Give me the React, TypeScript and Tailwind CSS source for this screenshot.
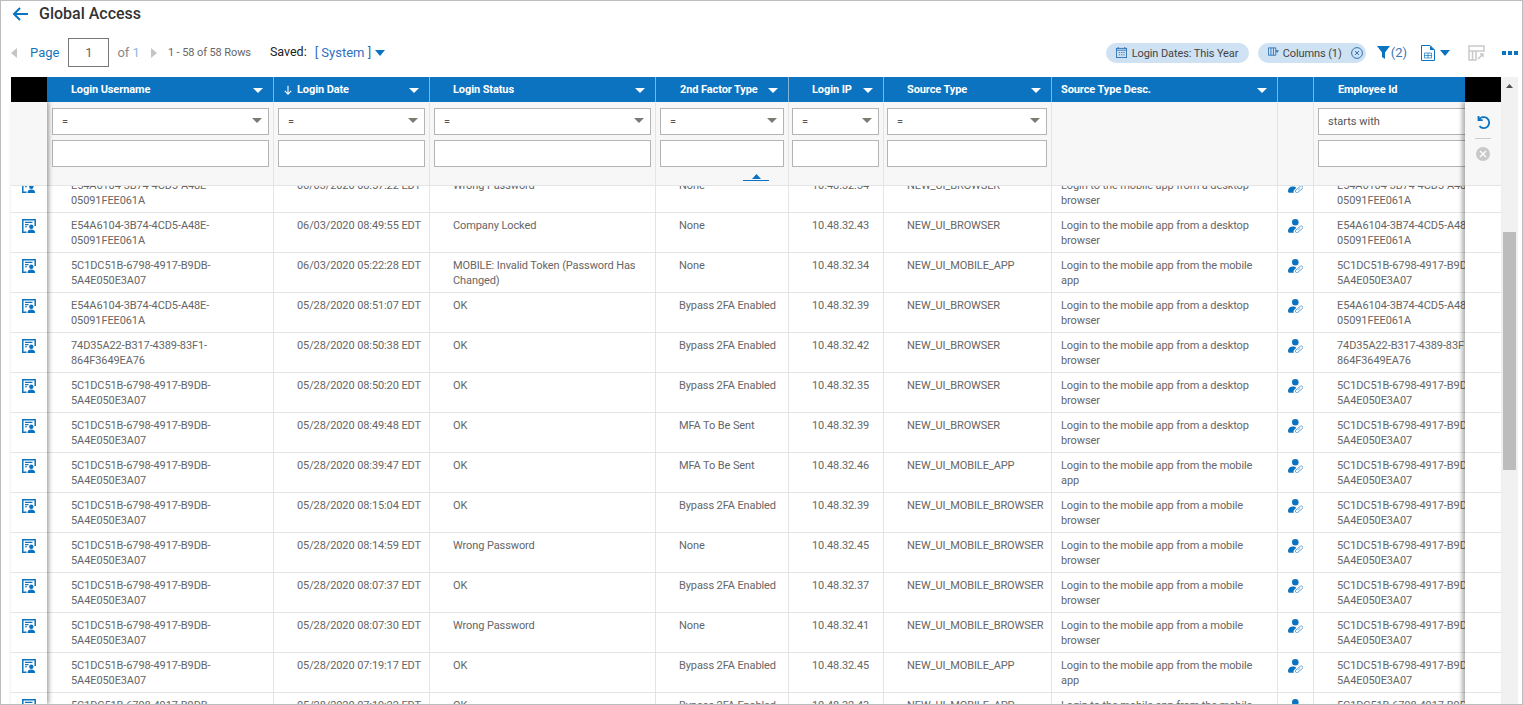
import React from 'react';

const GRID = 'grid grid-cols-[227px_156px_226px_133px_95px_168px_226px_36px_226px] w-[1493px]';

const E54 = 'E54A6104-3B74-4CD5-A48E-05091FEE061A';
const C51 = '5C1DC51B-6798-4917-B9DB-5A4E050E3A07';
const D35 = '74D35A22-B317-4389-83F1-864F3649EA76';
const DESKTOP = 'Login to the mobile app from a desktop browser';
const MOBILE_APP = 'Login to the mobile app from the mobile app';
const MOBILE_BROWSER = 'Login to the mobile app from a mobile browser';

const rows = [
  [E54, '06/03/2020 08:57:22 EDT', 'Wrong Password', 'None', '10.48.32.34', 'NEW_UI_BROWSER', DESKTOP],
  [E54, '06/03/2020 08:49:55 EDT', 'Company Locked', 'None', '10.48.32.43', 'NEW_UI_BROWSER', DESKTOP],
  [C51, '06/03/2020 05:22:28 EDT', 'MOBILE: Invalid Token (Password Has Changed)', 'None', '10.48.32.34', 'NEW_UI_MOBILE_APP', MOBILE_APP],
  [E54, '05/28/2020 08:51:07 EDT', 'OK', 'Bypass 2FA Enabled', '10.48.32.39', 'NEW_UI_BROWSER', DESKTOP],
  [D35, '05/28/2020 08:50:38 EDT', 'OK', 'Bypass 2FA Enabled', '10.48.32.42', 'NEW_UI_BROWSER', DESKTOP],
  [C51, '05/28/2020 08:50:20 EDT', 'OK', 'Bypass 2FA Enabled', '10.48.32.35', 'NEW_UI_BROWSER', DESKTOP],
  [C51, '05/28/2020 08:49:48 EDT', 'OK', 'MFA To Be Sent', '10.48.32.39', 'NEW_UI_BROWSER', DESKTOP],
  [C51, '05/28/2020 08:39:47 EDT', 'OK', 'MFA To Be Sent', '10.48.32.46', 'NEW_UI_MOBILE_APP', MOBILE_APP],
  [C51, '05/28/2020 08:15:04 EDT', 'OK', 'Bypass 2FA Enabled', '10.48.32.39', 'NEW_UI_MOBILE_BROWSER', MOBILE_BROWSER],
  [C51, '05/28/2020 08:14:59 EDT', 'Wrong Password', 'None', '10.48.32.45', 'NEW_UI_MOBILE_BROWSER', MOBILE_BROWSER],
  [C51, '05/28/2020 08:07:37 EDT', 'OK', 'Bypass 2FA Enabled', '10.48.32.37', 'NEW_UI_MOBILE_BROWSER', MOBILE_BROWSER],
  [C51, '05/28/2020 08:07:30 EDT', 'Wrong Password', 'None', '10.48.32.41', 'NEW_UI_MOBILE_BROWSER', MOBILE_BROWSER],
  [C51, '05/28/2020 07:19:17 EDT', 'OK', 'Bypass 2FA Enabled', '10.48.32.45', 'NEW_UI_MOBILE_APP', MOBILE_APP],
  [C51, '05/28/2020 07:19:22 EDT', 'OK', 'Bypass 2FA Enabled', '10.48.32.43', 'NEW_UI_MOBILE_APP', MOBILE_APP],
];

const Caret = ({ className }: { className: string }) => (
  <svg viewBox="0 0 10 6" preserveAspectRatio="none" className={className}>
    <path d="M0 0h10L5 6z" fill="currentColor" />
  </svg>
);

const PagerArrow = ({ d }: { d: string }) => (
  <svg viewBox="0 0 6 10" className="w-[6px] h-[10px]">
    <path d={d} fill="#c4c4c4" />
  </svg>
);

const DocPerson = () => (
  <svg viewBox="0 0 14 14" className="w-[14px] h-[14px] text-[#0b73c0]">
    <path d="M4.500 13.200H.8V.8h12.400V7" fill="none" stroke="currentColor" strokeWidth="1.500" />
    <path d="M3 3.400h7.500M3 5.600h3.500M3 7.800h2" stroke="currentColor" strokeWidth="1.100" />
    <circle cx="9.300" cy="7.700" r="2.200" fill="currentColor" />
    <path d="M5.400 14c0-2.400 1.500-3.500 3.900-3.500s3.900 1.100 3.900 3.500z" fill="currentColor" />
  </svg>
);

const PersonKey = () => (
  <svg viewBox="0 0 15 14" className="w-[15px] h-[14px] text-[#0b73c0]">
    <circle cx="7.300" cy="3.300" r="3.300" fill="currentColor" />
    <path d="M0 12c0-2.700 2-4.500 4.800-4.500 1.500 0 2.700.4 3.500 1.200L6 11.200c-.6.700-.6 1.800-.1 2.600H1.500C.6 13.800 0 13 0 12z" fill="currentColor" />
    <rect x="6.700" y="8.900" width="8.800" height="3" rx="1.500" transform="rotate(-40 11 10.400)" fill="none" stroke="#4f97d2" strokeWidth=".8" />
    <path d="M9.800 11.300l2.300-2" stroke="#4f97d2" strokeWidth=".6" />
  </svg>
);

const HeaderCell = ({ label, sorted, pad = 'pl-[23px]', noCaret }: { label?: string; sorted?: boolean; pad?: string; noCaret?: boolean }) => (
  <div className={`relative flex items-center h-[25px] pt-[2px] border-r border-[#7fb4dd] text-white text-[11px] font-bold tracking-[-0.1px] ${pad}`}>
    {sorted && (
      <svg viewBox="0 0 10 12" className="absolute left-[10px] top-[8px] w-[8px] h-[11px]">
        <path d="M5 0v10M1 6.500L5 10.500l4-4" fill="none" stroke="white" strokeWidth="1.400" />
      </svg>
    )}
    {label}
    {label && !noCaret && <Caret className="absolute right-[10px] top-[11px] w-[10px] h-[5px]" />}
  </div>
);

const FilterCell = ({ children, pad = 'pl-[4px]' }: { children?: React.ReactNode; pad?: string }) => (
  <div className={`relative h-[83px] border-r border-[#e4e4e4] pr-[4px] pt-[6px] flex flex-col gap-[5px] ${pad}`}>
    {children}
  </div>
);

const SelectBox = ({ label = '=', withCaret = true }: { label?: string; withCaret?: boolean }) => (
  <div className="relative h-[27px] w-full bg-white border border-[#b4b4b4] pl-[9px] pt-[2px] flex items-center text-[11px] text-[#555]">
    {label}
    {withCaret && <Caret className="absolute right-[6px] top-[9px] w-[10px] h-[5px] text-[#7d7a72]" />}
  </div>
);

const TextBox = () => <div className="h-[27px] w-full bg-white border border-[#b4b4b4]" />;

const OpFilter = ({ pad }: { pad?: string }) => (
  <FilterCell pad={pad}>
    <SelectBox />
    <TextBox />
  </FilterCell>
);

const Cell = ({ children, pad = 'pl-[23px] pr-[4px]' }: { children?: React.ReactNode; pad?: string }) => (
  <div className={`h-full border-r border-[#e4e4e4] pt-[5px] ${pad}`}>{children}</div>
);

export default function App() {
  return (
    <div className="w-[1523px] h-[705px] box-border border border-[#bdbdbd] bg-white overflow-hidden flex flex-col font-['Roboto',sans-serif]">
      <div className="flex items-center h-[25px] shrink-0 pl-[11px] gap-[11px]">
        <svg viewBox="0 0 16 14" className="w-[16px] h-[14px]">
          <path d="M16 7H2M8 1L2 7l6 6" fill="none" stroke="#0b73c0" strokeWidth="2" />
        </svg>
        <span className="text-[16px] font-medium text-[#333]">Global Access</span>
      </div>

      <div className="flex items-center h-[29px] mt-[12px] shrink-0 pl-[10px] pr-[4px]">
        <PagerArrow d="M6 0v10L0 5z" />
        <span className="ml-[13px] text-[13px] text-[#1b75bb]">Page</span>
        <div className="ml-[9px] w-[41px] h-[29px] border border-[#777] flex items-center justify-center text-[13px] text-[#666]">1</div>
        <span className="ml-[8px] text-[13px] text-[#888]">of <span className="text-[#8fb8dc]">1</span></span>
        <div className="ml-[11px]"><PagerArrow d="M0 0v10l6-5z" /></div>
        <span className="ml-[11px] pt-[2px] text-[11px] tracking-[-0.1px] text-[#666]">1 - 58 of 58 Rows</span>
        <span className="ml-[19px] text-[12.500px] text-[#222]">Saved:</span>
        <span className="ml-[8px] text-[13px] text-[#2f6fc4]">[ System ]</span>
        <Caret className="ml-[4px] w-[10px] h-[6px] text-[#0b73c0]" />

        <div className="ml-auto flex items-center">
          <div className="mt-px flex items-center h-[20px] w-[143px] pl-[10px] gap-[5px] rounded-full bg-[#cfe2f3] text-[11px] tracking-[-0.1px] text-[#444] whitespace-nowrap">
            <svg viewBox="0 0 12 12" className="w-[11px] h-[11px] -translate-y-px">
              <rect x=".5" y="1.500" width="11" height="10" fill="none" stroke="#2f74b5" />
              <path d="M.5 3.500h11M2.500 0v2M9.500 0v2M3 6h1.500M5.500 6H7M8 6h1.500M3 8.500h1.500M5.500 8.500H7M8 8.500h1.500" stroke="#2f74b5" />
            </svg>
            <span className="pt-[2px]">Login Dates: This Year</span>
          </div>
          <div className="mt-px ml-[9px] flex items-center h-[20px] w-[108px] pl-[10px] rounded-full bg-[#cfe2f3] text-[11px] tracking-[-0.1px] text-[#444] whitespace-nowrap">
            <svg viewBox="0 0 12 10" className="w-[11px] h-[10px] mr-[4px] -translate-y-px">
              <path d="M.5.500h8v8h-8zM3.200.500v8M5.900.500v8" fill="none" stroke="#2f74b5" />
              <path d="M8 3h4l-2 3z" fill="#2f74b5" />
            </svg>
            <span className="pt-[2px]">Columns (1)</span>
            <svg viewBox="0 0 12 12" className="ml-[9px] w-[12px] h-[12px]">
              <circle cx="6" cy="6" r="5.400" fill="none" stroke="#2f74b5" />
              <path d="M4 4l4 4M8 4l-4 4" stroke="#2f74b5" />
            </svg>
          </div>
          <svg viewBox="0 0 13 13" className="ml-[11px] w-[13px] h-[13px]">
            <path d="M0 0h13L8 6.500V13L5 11V6.500z" fill="#0b73c0" />
          </svg>
          <span className="ml-px text-[13px] text-[#3a78b5]">(2)</span>
          <svg viewBox="0 0 14 16" className="ml-[14px] w-[14px] h-[16px]">
            <path d="M.5.500h8.500l4.500 4.500v10.500H.5z" fill="white" stroke="#0b73c0" />
            <path d="M9 .5l4.500 4.500H9z" fill="#0b73c0" />
            <path d="M3.500 8h7v5h-7zM7 8v5M3.500 10.500h7" fill="none" stroke="#0b73c0" strokeWidth=".7" />
          </svg>
          <Caret className="ml-[5px] w-[10px] h-[6px] text-[#0b73c0]" />
          <svg viewBox="0 0 17 16" className="ml-[18px] w-[17px] h-[16px]">
            <path d="M1 1h15v5H8v9H1zM1 6h7M4.500 6v9M10 14l5-5M12 9h3v3" fill="none" stroke="#c9c9c9" strokeWidth="1.500" />
          </svg>
          <div className="ml-[17px] flex items-center gap-[2px]">
            <span className="w-[4px] h-[4px] bg-[#0b73c0]" />
            <span className="w-[4px] h-[4px] bg-[#0b73c0]" />
            <span className="w-[4px] h-[4px] bg-[#0b73c0]" />
          </div>
        </div>
      </div>

      <div className="flex flex-1 min-h-0 mt-[10px] pl-[10px]">
        <div className="relative z-10 w-[36px] shrink-0 flex flex-col">
          <div className="h-[25px] bg-black shrink-0" />
          <div className="flex-1 min-h-0 flex flex-col bg-white shadow-[2px_0_4px_rgba(0,0,0,0.35)]">
            <div className="h-[84px] shrink-0 bg-[#f7f7f7] border-b border-[#e4e4e4]" />
            <div className="flex-1 min-h-0 overflow-hidden">
              <div className="-mt-[13px]">
                {rows.map((_, i) => (
                  <div key={i} className="h-[40px] border-b border-[#e4e4e4] pl-[11px] pt-[6px]">
                    <DocPerson />
                  </div>
                ))}
              </div>
            </div>
          </div>
        </div>

        <div className="w-[1418px] shrink-0 flex flex-col overflow-hidden">
          <div className={`${GRID} bg-[#0b73c0] shrink-0`}>
            <HeaderCell label="Login Username" pad="pl-6" />
            <HeaderCell label="Login Date" sorted />
            <HeaderCell label="Login Status" />
            <HeaderCell label="2nd Factor Type" pad="pl-6" />
            <HeaderCell label="Login IP" />
            <HeaderCell label="Source Type" />
            <HeaderCell label="Source Type Desc." pad="pl-[9px]" />
            <HeaderCell />
            <HeaderCell label="Employee Id" noCaret pad="pl-6" />
          </div>
          <div className={`${GRID} bg-[#f7f7f7] border-b border-[#e4e4e4] shrink-0`}>
            <OpFilter pad="pl-[5px]" />
            <OpFilter />
            <OpFilter />
            <FilterCell>
              <SelectBox />
              <TextBox />
              <div className="absolute left-[87px] top-[72px] w-[26px] h-[7px] border-b border-[#0b73c0] flex justify-center">
                <Caret className="w-[9px] h-[5px] rotate-180 text-[#0b73c0]" />
              </div>
            </FilterCell>
            <OpFilter pad="pl-[3px]" />
            <OpFilter pad="pl-[3px]" />
            <FilterCell />
            <FilterCell />
            <FilterCell>
              <SelectBox label="starts with" withCaret={false} />
              <TextBox />
            </FilterCell>
          </div>
          <div className="flex-1 min-h-0 overflow-hidden text-[11px] tracking-[-0.1px] leading-[15px] text-[#666]">
            <div className="-mt-[13px]">
              {rows.map((r, i) => (
                <div key={i} className={`${GRID} h-[40px] border-b border-[#e4e4e4]`}>
                  <Cell pad="pl-6 pr-[4px]">{r[0]}</Cell>
                  <Cell>{r[1]}</Cell>
                  <Cell>{r[2]}</Cell>
                  <Cell>{r[3]}</Cell>
                  <Cell>{r[4]}</Cell>
                  <Cell>{r[5]}</Cell>
                  <Cell pad="pl-[9px] pr-[10px]">{r[6]}</Cell>
                  <div className="h-full border-r border-[#e4e4e4] pl-[10px] pt-[6px]">
                    <PersonKey />
                  </div>
                  <Cell>{r[0]}</Cell>
                </div>
              ))}
            </div>
          </div>
        </div>

        <div className="relative z-10 w-[36px] shrink-0 flex flex-col">
          <div className="h-[25px] bg-black shrink-0" />
          <div className="flex-1 min-h-0 flex flex-col bg-white shadow-[-3px_0_4px_rgba(0,0,0,0.3)]">
            <div className="h-[84px] shrink-0 bg-[#f7f7f7] border-b border-[#e4e4e4] flex flex-col items-center pt-[13px]">
              <svg viewBox="0 0 14 14" className="w-[14px] h-[14px]">
                <path d="M2.500 1v4.200h4.200M2.800 5A5.500 5.500 0 1 1 3.500 11.200" fill="none" stroke="#0b73c0" strokeWidth="1.800" />
              </svg>
              <div className="mt-[9px] w-[16px] border-t border-[#ccc]" />
              <div className="mt-[8px] w-[14px] h-[14px] rounded-full bg-[#c9c9c9] flex items-center justify-center">
                <svg viewBox="0 0 8 8" className="w-[8px] h-[8px]">
                  <path d="M1 1l6 6M7 1L1 7" stroke="white" strokeWidth="1.300" />
                </svg>
              </div>
            </div>
            <div className="flex-1 min-h-0 overflow-hidden">
              <div className="-mt-[13px]">
                {rows.map((_, i) => (
                  <div key={i} className="h-[40px] border-b border-[#e4e4e4]" />
                ))}
              </div>
            </div>
          </div>
        </div>

        <div className="w-[17px] shrink-0 bg-[#f1f1f1] flex flex-col items-center pt-[7px]">
          <Caret className="w-[7px] h-[4px] rotate-180 text-[#505050]" />
          <div className="mt-[144px] w-[13px] h-[238px] bg-[#bcbcbc]" />
        </div>
      </div>
    </div>
  );
}
